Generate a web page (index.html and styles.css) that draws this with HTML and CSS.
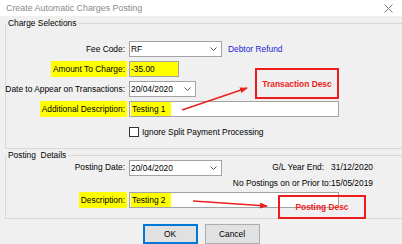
FILE: index.html
```html
<!DOCTYPE html>
<html lang="en">
<head>
  <meta charset="UTF-8" />
  <title>Create Automatic Charges Posting</title>
  <link rel="stylesheet" href="styles.css">
</head>
<body>

  <div class="titlebar">
    <span class="title">Create Automatic Charges Posting</span>
    <svg class="close" width="9" height="9" viewBox="0 0 9 9">
      <path d="M0.5 0.5 L8.5 8.5 M8.5 0.5 L0.5 8.5" stroke="#7a7a7a" stroke-width="1" />
    </svg>
  </div>

  <div class="client">

    <!-- Charge Selections -->
    <fieldset class="group">
      <legend>Charge Selections</legend>
      <div class="form charges">
        <label class="lbl">Fee Code:</label>
        <div class="ctl inline">
          <div class="combo">
            <span>RF</span>
            <svg class="chev" width="7" height="4" viewBox="0 0 7 4"><path d="M0.5 0.5 L3.5 3.5 L6.5 0.5" fill="none" stroke="#555" stroke-width="1" /></svg>
          </div>
          <span class="link">Debtor Refund</span>
        </div>

        <label class="lbl hl">Amount To Charge:</label>
        <div class="ctl">
          <div class="textbox amount">-35.00</div>
        </div>

        <label class="lbl">Date to Appear on Transactions:</label>
        <div class="ctl">
          <div class="combo date">
            <span>20/04/2020</span>
            <svg class="chev" width="7" height="4" viewBox="0 0 7 4"><path d="M0.5 0.5 L3.5 3.5 L6.5 0.5" fill="none" stroke="#555" stroke-width="1" /></svg>
          </div>
        </div>

        <label class="lbl hl">Additional Description:</label>
        <div class="ctl">
          <div class="textbox wide"><span class="mark">Testing 1</span></div>
        </div>

        <div class="ctl check-row">
          <span class="checkbox"></span>
          <span>Ignore Split Payment Processing</span>
        </div>
      </div>
    </fieldset>

    <!-- Posting Details -->
    <fieldset class="group posting-group">
      <legend>Posting&nbsp; Details</legend>
      <div class="form posting">
        <div class="info first">G/L Year End:&nbsp;&nbsp;&nbsp;31/12/2020</div>

        <label class="lbl">Posting Date:</label>
        <div class="ctl">
          <div class="combo">
            <span>20/04/2020</span>
            <svg class="chev" width="7" height="4" viewBox="0 0 7 4"><path d="M0.5 0.5 L3.5 3.5 L6.5 0.5" fill="none" stroke="#555" stroke-width="1" /></svg>
          </div>
        </div>
        <div class="info">No Postings on or Prior to:15/05/2019</div>

        <label class="lbl hl">Description:</label>
        <div class="ctl span2">
          <div class="textbox wide"><span class="mark">Testing 2</span></div>
        </div>
      </div>
    </fieldset>

    <div class="buttons">
      <button class="btn default">OK</button>
      <button class="btn">Cancel</button>
    </div>
  </div>

  <!-- Annotations drawn over the screenshot -->
  <svg class="arrows" width="402" height="244" viewBox="0 0 402 244">
    <defs>
      <marker id="head" markerWidth="8" markerHeight="6" refX="7" refY="3" orient="auto" markerUnits="userSpaceOnUse">
        <path d="M0 0 L8 3 L0 6 Z" fill="#e8221e" />
      </marker>
    </defs>
    <line x1="182" y1="110" x2="247" y2="88" stroke="#e8221e" stroke-width="1.5" marker-end="url(#head)" />
    <line x1="193" y1="201" x2="267" y2="206" stroke="#e8221e" stroke-width="1.5" marker-end="url(#head)" />
  </svg>
  <div class="callout trans">Transaction Desc</div>
  <div class="callout post">Posting Desc</div>

</body>
</html>
```

FILE: styles.css
```css
* {
  box-sizing: border-box;
}

body {
  margin: 0;
  width: 402px;
  height: 244px;
  overflow: hidden;
  position: relative;
  background: #f0f0f0;
  font-family: "Liberation Sans", Arial, sans-serif;
  font-size: 8.4px;
  color: #000;
}

.titlebar {
  height: 16px;
  background: #fff;
  display: flex;
  align-items: center;
  justify-content: space-between;
  padding: 0 9px 0 6px;
}

.title {
  font-size: 8.9px;
  color: #8a8a8a;
}

.client {
  padding-top: 2px;
}

/* Group boxes */
.group {
  margin: 0 -8px 0 5px;
  padding: 0;
  border: 1px solid #d9d9d9;
  min-width: 0;
}

.group legend {
  padding: 0 2px;
  line-height: 10px;
}

.posting-group {
  margin-top: 1px;
}

.form {
  display: grid;
  column-gap: 2px;
  align-items: center;
}

.charges {
  grid-template-columns: 121px auto;
  grid-template-rows: repeat(4, 16px) 18px;
  row-gap: 4px;
  padding: 13px 0 9px 0;
}

.posting {
  grid-template-columns: 121px 93px 149px;
  grid-template-rows: 13px 17px 16px;
  row-gap: 1px;
  padding: 0 0 10px 0;
}

.lbl {
  justify-self: end;
  white-space: nowrap;
  height: 16px;
  line-height: 16px;
  padding: 0 2px 0 2px;
}

.lbl.hl {
  background: #ffff00;
}

.ctl {
  grid-column: 2;
  align-self: start;
}

.inline {
  display: flex;
  align-items: center;
  gap: 6px;
}

.span2 {
  grid-column: 2 / 4;
}

.info {
  grid-column: 3;
  text-align: right;
  white-space: nowrap;
}

.info.first {
  grid-row: 1;
}

/* Inputs */
.combo,
.textbox {
  height: 16px;
  background: #fff;
  border: 1px solid #a3a3a3;
  display: flex;
  align-items: center;
  padding: 0 0 0 1px;
  white-space: nowrap;
}

.combo {
  width: 93px;
  justify-content: space-between;
  padding-right: 4px;
}

.combo.date {
  width: 67px;
}

.textbox.amount {
  width: 50px;
  background: #ffff00;
}

.textbox.wide {
  width: 210px;
}

.mark {
  height: 100%;
  display: flex;
  align-items: center;
  background: #ffff00;
  padding: 0 5px 0 1px;
}

.link {
  color: #2424d6;
}

.check-row {
  display: flex;
  align-items: center;
  gap: 3px;
  height: 16px;
  margin-top: 3px;
  padding-left: 0;
}

.checkbox {
  width: 10px;
  height: 10px;
  border: 1px solid #333;
  background: #fff;
}

/* Dialog buttons */
.buttons {
  display: flex;
  justify-content: center;
  gap: 7px;
  margin-top: 5px;
}

.btn {
  width: 55px;
  height: 20px;
  padding: 0;
  font-family: inherit;
  font-size: 8.4px;
  color: #000;
  background: #e1e1e1;
  border: 1px solid #adadad;
}

.btn.default {
  border: 2px solid #0078d7;
}

/* Red annotations */
.arrows {
  position: absolute;
  top: 0;
  left: 0;
  pointer-events: none;
}

.callout {
  position: absolute;
  display: flex;
  align-items: center;
  justify-content: center;
  border: 2px solid #ee1c1c;
  color: #ee1c1c;
  font-weight: bold;
  font-size: 8.4px;
}

.callout.trans {
  left: 255px;
  top: 68px;
  width: 84px;
  height: 31px;
}

.callout.post {
  left: 278px;
  top: 195px;
  width: 88px;
  height: 24px;
}
```
